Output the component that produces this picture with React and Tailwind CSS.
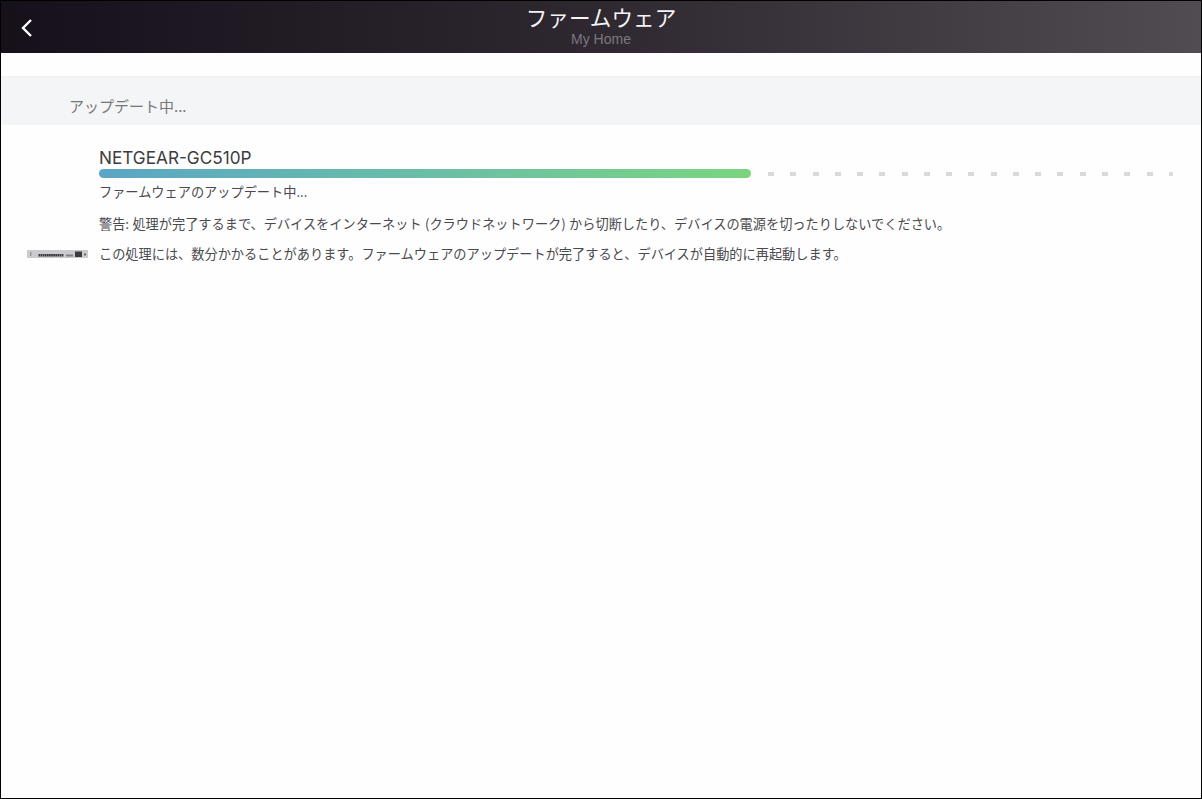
const jp = { fontFamily: '"Noto Sans CJK JP", "Liberation Sans", sans-serif' };

function SwitchImage() {
  const ports = [];
  for (let i = 0; i < 12; i++) ports.push(<rect key={i} x={11.5 + i * 2.1} y="4" width="1.8" height="2.5" fill="#3c3c42" />);
  return (
    <svg width="62" height="8" viewBox="0 0 62 8" className="shrink-0 self-end mb-[6px]">
      <rect x="0" y="0" width="61" height="8" fill="#cbcbcd" />
      <rect x="3" y="2" width="1.5" height="4" fill="#9a9a9d" />
      {ports}
      <rect x="39" y="4.5" width="7" height="2" fill="#808084" />
      <rect x="48" y="1.5" width="7" height="5.5" fill="#3a3a3f" />
      <rect x="57" y="3.5" width="2" height="2" fill="#66666a" />
    </svg>
  );
}

export default function App() {
  return (
    <div className="w-[1202px] h-[799px] border border-black bg-[#fefefe] flex flex-col overflow-hidden" style={jp}>
      <header className="h-[52px] shrink-0 relative flex flex-col items-center bg-gradient-to-r from-[#15101a] via-[#2f2831] to-[#514c52]">
        <button className="absolute left-[19px] top-[17px] text-white">
          <svg width="14" height="20" viewBox="0 0 14 20" fill="none" stroke="currentColor" strokeWidth="2.4">
            <path d="M11 2 L3 10 L11 18" />
          </svg>
        </button>
        <div className="text-[21.6px] leading-[28px] mt-[2px] text-[#f4f4f5]">ファームウェア</div>
        <div className="text-[14px] leading-[16px] text-[#7c7880]" style={{ fontFamily: '"Liberation Sans", sans-serif' }}>My Home</div>
      </header>
      <div className="h-[23px] shrink-0 border-b border-[#f1f1f2] box-content" />
      <div className="h-[48px] shrink-0 bg-[#f4f5f7] pl-[68px] pt-[10px] flex items-center text-[15px] text-[#77777a]">アップデート中...</div>
      <div className="flex pl-[26px] pr-[28px] pt-[22px]">
        <SwitchImage />
        <div className="ml-[10px] flex-1 min-w-0">
          <div className="text-[17.2px] leading-[22px] text-[#3c3c40]" style={{ fontFamily: '"Inter", "Liberation Sans", sans-serif' }}>NETGEAR-GC510P</div>
          <div className="flex items-center h-[9px]">
            <div className="w-[652px] h-[9px] rounded-full bg-gradient-to-r from-[#5ba5c6] to-[#7bd57d]" />
            <div className="flex-1 flex justify-between pl-[17px]">
              {Array.from({ length: 19 }).map((_, i) => (
                <div key={i} className={i === 18 ? "w-[4px] h-[4px] bg-[#dcdcde]" : "w-[6px] h-[4px] bg-[#d9d9db]"} />
              ))}
            </div>
          </div>
          <div className="mt-[4px] text-[13.2px] leading-[20px] text-[#4a4a4e]">ファームウェアのアップデート中...</div>
          <div className="mt-[12px] text-[13.2px] leading-[20px] text-[#4a4a4e] [word-spacing:0.4px]">警告: 処理が完了するまで、デバイスをインターネット (クラウドネットワーク) から切断したり、デバイスの電源を切ったりしないでください。</div>
          <div className="mt-[10px] text-[13.2px] leading-[20px] text-[#4a4a4e]">この処理には、数分かかることがあります。ファームウェアのアップデートが完了すると、デバイスが自動的に再起動します。</div>
        </div>
      </div>
    </div>
  );
}
